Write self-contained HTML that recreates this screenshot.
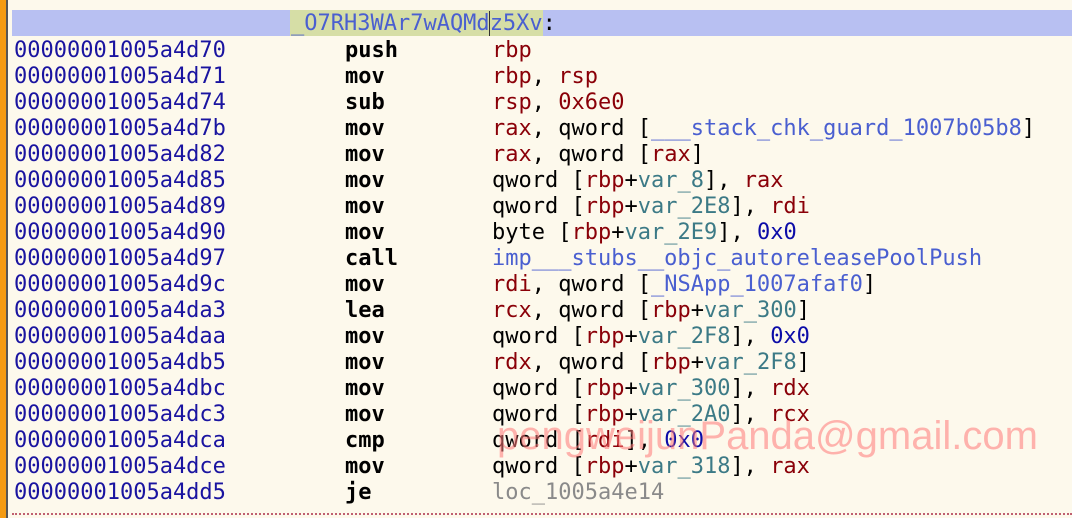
<!DOCTYPE html>
<html><head><meta charset="utf-8"><style>
html,body{margin:0;padding:0;}
body{width:1072px;height:518px;background:#fdf9ec;position:relative;overflow:hidden;font-family:"DejaVu Sans Mono","Liberation Mono",monospace;font-size:22px;}
.bar{position:absolute;left:0;top:0;width:6px;height:518px;background:#f39a12;}
.bar2{position:absolute;left:6px;top:0;width:2px;height:518px;background:#555;}
.hl{position:absolute;left:12px;top:10px;width:1060px;height:26px;background:#b8c0f2;}
.lb{position:absolute;left:290px;top:10px;width:253px;height:26px;background:#d6dea6;}
.row{position:absolute;left:14px;height:26px;line-height:26px;white-space:pre;}
.a{color:#1a14a0;position:absolute;left:0;}
.m{color:#000;font-weight:bold;position:absolute;left:331px;}
.o{color:#000;position:absolute;left:478px;}
.r{color:#8a0008}.v{color:#3c7a86}.s{color:#4a5fd0}.n{color:#0c0ca8}.g{color:#8a8a8a}
.dots{position:absolute;left:12px;right:0;top:513px;border-top:2px dotted #c06070;}
.wm{position:absolute;left:497px;top:414px;font-family:"Liberation Sans",sans-serif;font-size:40px;color:rgba(255,120,120,0.55);white-space:nowrap;}
</style></head><body>
<div class="bar"></div><div class="bar2"></div>
<div class="hl"></div><div class="lb"></div>
<div class="row" style="top:11px;left:291px;color:#4a5fd0">_O7RH3WAr7wAQMd<span style="border-left:1px solid #333;margin-left:-1px"></span>z5Xv<span style="color:#000">:</span></div>
<div class="row" style="top:38px"><span class="a">00000001005a4d70</span><span class="m">push</span><span class="o"><span class="r">rbp</span></span></div>
<div class="row" style="top:64px"><span class="a">00000001005a4d71</span><span class="m">mov</span><span class="o"><span class="r">rbp</span>, <span class="r">rsp</span></span></div>
<div class="row" style="top:90px"><span class="a">00000001005a4d74</span><span class="m">sub</span><span class="o"><span class="r">rsp</span>, <span class="r">0x6e0</span></span></div>
<div class="row" style="top:116px"><span class="a">00000001005a4d7b</span><span class="m">mov</span><span class="o"><span class="r">rax</span>, qword [<span class="s">___stack_chk_guard_1007b05b8</span>]</span></div>
<div class="row" style="top:142px"><span class="a">00000001005a4d82</span><span class="m">mov</span><span class="o"><span class="r">rax</span>, qword [<span class="r">rax</span>]</span></div>
<div class="row" style="top:168px"><span class="a">00000001005a4d85</span><span class="m">mov</span><span class="o">qword [<span class="r">rbp</span>+<span class="v">var_8</span>], <span class="r">rax</span></span></div>
<div class="row" style="top:194px"><span class="a">00000001005a4d89</span><span class="m">mov</span><span class="o">qword [<span class="r">rbp</span>+<span class="v">var_2E8</span>], <span class="r">rdi</span></span></div>
<div class="row" style="top:220px"><span class="a">00000001005a4d90</span><span class="m">mov</span><span class="o">byte [<span class="r">rbp</span>+<span class="v">var_2E9</span>], <span class="n">0x0</span></span></div>
<div class="row" style="top:246px"><span class="a">00000001005a4d97</span><span class="m">call</span><span class="o"><span class="s">imp___stubs__objc_autoreleasePoolPush</span></span></div>
<div class="row" style="top:272px"><span class="a">00000001005a4d9c</span><span class="m">mov</span><span class="o"><span class="r">rdi</span>, qword [<span class="s">_NSApp_1007afaf0</span>]</span></div>
<div class="row" style="top:298px"><span class="a">00000001005a4da3</span><span class="m">lea</span><span class="o"><span class="r">rcx</span>, qword [<span class="r">rbp</span>+<span class="v">var_300</span>]</span></div>
<div class="row" style="top:324px"><span class="a">00000001005a4daa</span><span class="m">mov</span><span class="o">qword [<span class="r">rbp</span>+<span class="v">var_2F8</span>], <span class="n">0x0</span></span></div>
<div class="row" style="top:350px"><span class="a">00000001005a4db5</span><span class="m">mov</span><span class="o"><span class="r">rdx</span>, qword [<span class="r">rbp</span>+<span class="v">var_2F8</span>]</span></div>
<div class="row" style="top:376px"><span class="a">00000001005a4dbc</span><span class="m">mov</span><span class="o">qword [<span class="r">rbp</span>+<span class="v">var_300</span>], <span class="r">rdx</span></span></div>
<div class="row" style="top:402px"><span class="a">00000001005a4dc3</span><span class="m">mov</span><span class="o">qword [<span class="r">rbp</span>+<span class="v">var_2A0</span>], <span class="r">rcx</span></span></div>
<div class="row" style="top:428px"><span class="a">00000001005a4dca</span><span class="m">cmp</span><span class="o">qword [<span class="r">rdi</span>], <span class="n">0x0</span></span></div>
<div class="row" style="top:454px"><span class="a">00000001005a4dce</span><span class="m">mov</span><span class="o">qword [<span class="r">rbp</span>+<span class="v">var_318</span>], <span class="r">rax</span></span></div>
<div class="row" style="top:480px"><span class="a">00000001005a4dd5</span><span class="m">je</span><span class="o"><span class="g">loc_1005a4e14</span></span></div>
<div class="wm">pengweijunPanda@gmail.com</div>
<div class="dots"></div>
</body></html>
